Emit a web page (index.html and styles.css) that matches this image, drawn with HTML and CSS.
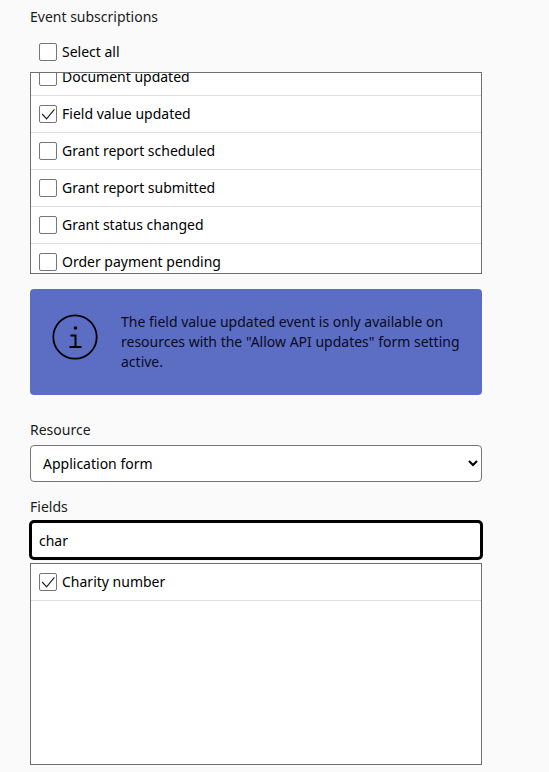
FILE: index.html
```html
<!DOCTYPE html>
<html lang="en">
<head>
    <meta charset="UTF-8">
    <meta name="viewport" content="width=device-width, initial-scale=1.0">
    <title>Webhook</title>
    <link rel="stylesheet" href="styles.css">
</head>
<body>
<main class="form">
    <div class="label first">Event subscriptions</div>
    <div class="select-all">
        <span class="box"></span>
        <span>Select all</span>
    </div>
    <div class="list events">
        <div class="rows">
            <div class="row"><span class="box"></span><span>Document updated</span></div>
            <div class="row">
                <span class="box">
                    <svg viewBox="0 0 16 16" width="16" height="16"><path d="M2.2 8 L6.6 12.8 L14.4 3.4" fill="none" stroke="#222" stroke-width="1.2"/></svg>
                </span>
                <span>Field value updated</span>
            </div>
            <div class="row"><span class="box"></span><span>Grant report scheduled</span></div>
            <div class="row"><span class="box"></span><span>Grant report submitted</span></div>
            <div class="row"><span class="box"></span><span>Grant status changed</span></div>
            <div class="row"><span class="box"></span><span>Order payment pending</span></div>
        </div>
    </div>
    <div class="alert">
        <svg class="alert-icon" viewBox="0 0 46 46" width="46" height="46">
            <circle cx="23" cy="23" r="21.7" fill="none" stroke="#000" stroke-width="1.8"/>
            <circle cx="23.5" cy="14" r="1.8" fill="#000"/>
            <path d="M18.5 21.5 H23.5 V33 M17.5 33 H29.5" fill="none" stroke="#000" stroke-width="2"/>
        </svg>
        <p>The field value updated event is only available on resources with the "Allow API updates" form setting active.</p>
    </div>
    <label class="label resource-label" for="resource">Resource</label>
    <select class="select" id="resource">
        <option>Application form</option>
    </select>
    <label class="label fields-label" for="search">Fields</label>
    <input class="search" id="search" type="text" value="char">
    <div class="list fields">
        <div class="row">
            <span class="box">
                <svg viewBox="0 0 16 16" width="16" height="16"><path d="M2.2 8 L6.6 12.8 L14.4 3.4" fill="none" stroke="#222" stroke-width="1.2"/></svg>
            </span>
            <span>Charity number</span>
        </div>
    </div>
</main>
</body>
</html>
```

FILE: styles.css
```css
* {
    box-sizing: border-box;
}
body {
    margin: 0;
    background: #fafafa;
    color: #000;
    font-family: "Noto Sans", sans-serif;
    font-size: 14px;
    line-height: 20px;
}
.form {
    display: flex;
    flex-direction: column;
    width: 452px;
    margin-left: 30px;
}
.label {
    display: block;
    color: #1a1a1a;
}
.first {
    margin-top: 7px;
}
.select-all {
    display: flex;
    align-items: center;
    gap: 5px;
    height: 18px;
    margin: 16px 0 11px 9px;
}
.box {
    display: flex;
    align-items: center;
    justify-content: center;
    flex: none;
    width: 18px;
    height: 18px;
    background: #fff;
    border: 1px solid #767676;
    border-radius: 2px;
}
.list {
    height: 202px;
    background: #fff;
    border: 1px solid #6f6f6f;
    overflow: hidden;
}
.rows {
    margin-top: -14px;
}
.row {
    display: flex;
    align-items: center;
    gap: 5px;
    height: 37px;
    padding-left: 8px;
    border-bottom: 1px solid #ddd;
}
.alert {
    display: flex;
    align-items: flex-start;
    gap: 23px;
    height: 106px;
    margin-top: 15px;
    padding: 23px 22px 0;
    background: #5c6ec4;
    border-radius: 4px;
}
.alert-icon {
    flex: none;
    margin-top: 2px;
}
.alert p {
    margin: 0;
    color: #0a0a1e;
}
.resource-label {
    margin-top: 25px;
}
.select {
    width: 100%;
    height: 37px;
    margin-top: 5px;
    padding: 0 8px;
    background: #fff;
    border: 1px solid #767676;
    border-radius: 4px;
    color: #000;
    font-family: "Noto Sans", sans-serif;
    font-size: 14px;
}
.fields-label {
    margin-top: 15px;
}
.search {
    width: 454px;
    height: 40px;
    margin: 3px 0 3px -1px;
    padding: 0 7px;
    background: #fff;
    border: 3px solid #000;
    border-radius: 5px;
    color: #000;
    font-family: "Noto Sans", sans-serif;
    font-size: 14px;
    outline: none;
}
```
